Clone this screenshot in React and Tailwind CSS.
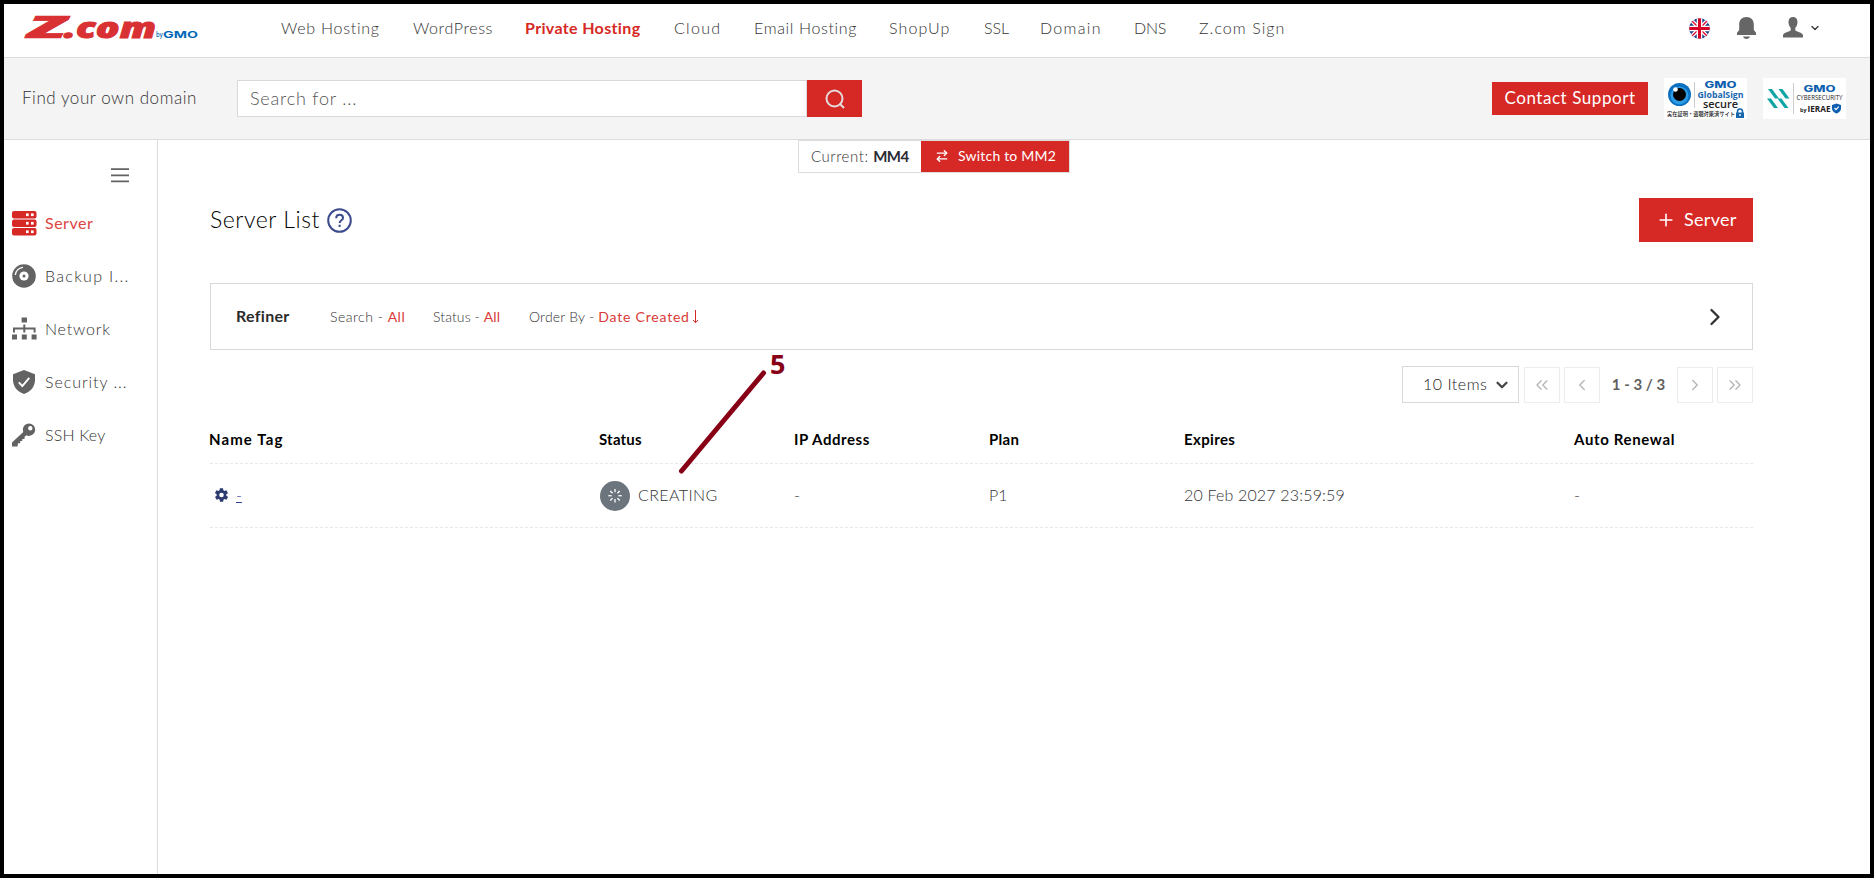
import {
    ArrowRightLeft,
    ChevronDown,
    ChevronLeft,
    ChevronRight,
    ChevronsLeft,
    ChevronsRight,
    Plus,
} from "lucide-react";

const NAV = [
    { label: "Web Hosting", cls: "w-[99px] tracking-[0.75px]" },
    { label: "WordPress", cls: "w-[79px] tracking-[0.6px]" },
    { label: "Private Hosting", cls: "w-[116px] font-bold text-[#d62926] tracking-[0.35px]" },
    { label: "Cloud", cls: "w-[47px] tracking-[1.3px]" },
    { label: "Email Hosting", cls: "w-[102px] tracking-[0.65px]" },
    { label: "ShopUp", cls: "w-[62px] tracking-[1.1px]" },
    { label: "SSL", cls: "w-[23px] tracking-[-0.1px]" },
    { label: "Domain", cls: "w-[61px] tracking-[1.3px]" },
    { label: "DNS", cls: "w-[32px] tracking-[-0.2px]" },
    { label: "Z.com Sign", cls: "w-[88px] tracking-[1.05px]" },
];

const COLUMNS = [
    { label: "Name Tag", cls: "tracking-[1.1px]" },
    { label: "Status", cls: "tracking-[0.2px]" },
    { label: "IP Address", cls: "tracking-[0.55px]" },
    { label: "Plan", cls: "tracking-[0.3px]" },
    { label: "Expires", cls: "tracking-[0.35px]" },
    { label: "Auto Renewal", cls: "tracking-[0.65px]" },
];
const GRID = "grid grid-cols-[390px_195px_195px_195px_390px_178px]";

function Logo() {
    return (
        <svg width="182" height="46" viewBox="-5 -10 182 46" className="block shrink-0">
            <g fill="#d93133" stroke="#d93133" fontFamily="'Open Sans', sans-serif" fontWeight="800" fontStyle="italic">
                <text x="4" y="23" fontSize="30" strokeWidth="0.6" textLength="38" lengthAdjust="spacingAndGlyphs">Z</text>
                <text x="40" y="23" fontSize="29" strokeWidth="1" textLength="92" lengthAdjust="spacingAndGlyphs">.com</text>
            </g>
            <g fill="#0068b6" fontFamily="Inter, sans-serif">
                <text x="132" y="22" fontSize="7" fontWeight="500" textLength="7" lengthAdjust="spacingAndGlyphs">by</text>
                <text x="139" y="23" fontSize="9.6" fontWeight="700" textLength="35" lengthAdjust="spacingAndGlyphs">GMO</text>
            </g>
        </svg>
    );
}

function Flag() {
    return (
        <svg width="21" height="21" viewBox="0 0 21 21" className="block">
            <clipPath id="round"><circle cx="10.5" cy="10.5" r="10.3" /></clipPath>
            <g clipPath="url(#round)">
                <rect width="21" height="21" fill="#1b3b8b" />
                <path d="M0 0L21 21M21 0L0 21" stroke="#fff" strokeWidth="4" />
                <path d="M0 0L21 21M21 0L0 21" stroke="#d80027" strokeWidth="1.3" />
                <path d="M10.5 0V21M0 10.5H21" stroke="#fff" strokeWidth="5.6" />
                <path d="M10.5 0V21M0 10.5H21" stroke="#d80027" strokeWidth="3" />
            </g>
        </svg>
    );
}

function BellIcon() {
    return (
        <svg width="19" height="22" viewBox="0 0 19 22" fill="#666" className="block">
            <path d="M9.5 0C5 0 2.2 3 2.2 7.2V13L0 15.7V18H19V15.7L16.8 13V7.2C16.8 3 14 0 9.5 0Z" />
            <path d="M6 19.6H13C12.5 21 11.2 22 9.5 22S6.5 21 6 19.6Z" />
        </svg>
    );
}

function UserIcon() {
    return (
        <svg width="20" height="21" viewBox="0 0 20 21" fill="#666" className="block">
            <path d="M10 0C12.7 0 14.5 1.8 14.5 4.8C14.5 7.5 13.7 9.5 12.3 10.8V13.5C14.5 15 20 15.5 20 18.5V20.5H0V18.5C0 15.5 5.5 15 7.7 13.5V10.8C6.3 9.5 5.5 7.5 5.5 4.8C5.5 1.8 7.3 0 10 0Z" />
        </svg>
    );
}

function GlobalSignBadge() {
    return (
        <svg width="83" height="41" viewBox="0 0 83 41" className="block bg-white">
            <circle cx="15.5" cy="16.5" r="11.5" fill="#0b6fc0" />
            <circle cx="15.5" cy="17.5" r="9" fill="#2b9be6" />
            <circle cx="15.5" cy="16.5" r="6.5" fill="#000" />
            <circle cx="11.5" cy="11.5" r="2.3" fill="#fff" />
            <path d="M30.5 4V30" stroke="#ccc" />
            <text x="40.5" y="10" fontSize="8.6" fontWeight="800" fill="#0f5fb0" fontFamily="Inter, sans-serif" textLength="32" lengthAdjust="spacingAndGlyphs">GMO</text>
            <text x="33.5" y="19.5" fontSize="8.3" fontWeight="700" fill="#1766b0" fontFamily="'Open Sans', sans-serif" textLength="46" lengthAdjust="spacingAndGlyphs">GlobalSign</text>
            <text x="39" y="30" fontSize="10" fontWeight="600" fill="#222" fontFamily="'Open Sans', sans-serif" textLength="35" lengthAdjust="spacingAndGlyphs">secure</text>
            <text x="3" y="38.3" fontSize="5.8" fontWeight="500" fill="#222" fontFamily="'Noto Sans CJK JP', sans-serif" textLength="68" lengthAdjust="spacingAndGlyphs">実在証明・盗聴対策済サイト</text>
            <path d="M73.5 35V33.5A2.5 2.5 0 0 1 78.5 33.5V35" fill="none" stroke="#1766b0" strokeWidth="1.5" />
            <rect x="72" y="34.5" width="8" height="5.5" fill="#1766b0" />
            <circle cx="76" cy="37" r="0.9" fill="#fff" />
        </svg>
    );
}

function CyberSecurityBadge() {
    return (
        <svg width="83" height="41" viewBox="0 0 83 41" className="block bg-white">
            <g fill="#12a5a5">
                <path d="M5 11H9L16 20.5H12Z" />
                <path d="M15.5 11H19.5L26.5 20.5H22.5Z" />
                <path d="M4 20.5H8L15 30H11Z" />
                <path d="M14.5 20.5H18.5L25.5 30H21.5Z" />
            </g>
            <path d="M30.5 5V36" stroke="#ccc" />
            <text x="40.5" y="14" fontSize="8.6" fontWeight="800" fill="#0f5fb0" fontFamily="Inter, sans-serif" textLength="32" lengthAdjust="spacingAndGlyphs">GMO</text>
            <text x="33.5" y="22.3" fontSize="6.6" fill="#222" fontWeight="400" fontFamily="'Open Sans', sans-serif" textLength="46" lengthAdjust="spacingAndGlyphs">CYBERSECURITY</text>
            <text x="37" y="33.5" fontSize="5.5" fontWeight="700" fill="#222" fontFamily="'Open Sans', sans-serif" textLength="6.5" lengthAdjust="spacingAndGlyphs">by</text>
            <text x="44.5" y="34" fontSize="8" fontWeight="700" fill="#222" fontFamily="'Open Sans', sans-serif" textLength="23" lengthAdjust="spacingAndGlyphs">IERAE</text>
            <path d="M73.5 25.5L78 27V30.5C78 33 76 34.5 73.5 35.5C71 34.5 69 33 69 30.5V27Z" fill="#0f5fb0" />
            <path d="M71.5 30L73 31.7L75.7 28.6" fill="none" stroke="#fff" strokeWidth="1.2" />
        </svg>
    );
}

function ServerIcon() {
    return (
        <svg width="25" height="25" viewBox="0 0 25 25" className="relative top-px block">
            {[0, 8.5, 17].map((y) => (
                <g key={y} transform={`translate(0 ${y})`}>
                    <rect width="24.5" height="7.6" rx="2" fill="#d62926" />
                    <rect x="14" y="2.4" width="2.7" height="2.7" fill="#fff" />
                    <rect x="19" y="2.4" width="2.7" height="2.7" fill="#fff" />
                </g>
            ))}
        </svg>
    );
}

function DiscIcon() {
    return (
        <svg width="24" height="24" viewBox="0 0 24 24" fill="none" className="block">
            <circle cx="12" cy="12" r="11.8" fill="#636363" />
            <circle cx="12" cy="12" r="4.6" fill="#fff" />
            <circle cx="12" cy="12" r="1.5" fill="#636363" />
            <path d="M3.3 11A8.7 8.7 0 0 1 11 3.3" stroke="#fff" strokeWidth="1.3" />
        </svg>
    );
}

function NetworkIcon() {
    return (
        <svg width="25" height="24" viewBox="0 0 25 24" fill="#636363" className="block">
            <path d="M9.6 0.5H15V5.5H9.6ZM0 17.5H5V22.5H0ZM9.8 17.5H14.8V22.5H9.8ZM19.6 17.5H24.6V22.5H19.6Z" />
            <path d="M12.3 7.5V15.5M2 15.5V11.5H22.6V15.5" fill="none" stroke="#636363" strokeWidth="2" />
        </svg>
    );
}

function ShieldIcon() {
    return (
        <svg width="24" height="24" viewBox="0 0 24 24" fill="none" className="block">
            <path d="M12 0L23 4.2V10C23 17 18 22 12 24C6 22 1 17 1 10V4.2Z" fill="#636363" />
            <path d="M6.8 12.3L10.3 16L17.3 7.8" stroke="#fff" strokeWidth="1.9" />
        </svg>
    );
}

function KeyIcon() {
    return (
        <svg width="24" height="24" viewBox="0 0 24 24" fill="#636363" className="block">
            <path fillRule="evenodd" d="M17 0.5A6.2 6.2 0 0 1 17 12.9C16 12.9 15 12.7 14.2 12.2L12.5 14V16H10.3V18H8.2V20.2H6L5.5 23.5H0V19.5L11.3 9A6.2 6.2 0 0 1 17 0.5ZM18.3 3A2.2 2.2 0 1 0 18.3 7.4A2.2 2.2 0 0 0 18.3 3Z" />
        </svg>
    );
}

function GearIcon() {
    return (
        <svg width="13" height="14" viewBox="2 1.5 20 21" preserveAspectRatio="none" fill="#2e3b6e" className="block">
            <path d="M19.4 13c0-.3.1-.6.1-1s0-.7-.1-1l2.2-1.7c.2-.2.2-.4.1-.7l-2-3.5c-.1-.2-.4-.3-.6-.2l-2.6 1c-.5-.4-1.1-.7-1.7-1l-.4-2.7c0-.2-.2-.4-.5-.4h-4c-.2 0-.5.2-.5.4L9 4.9c-.6.3-1.2.6-1.7 1l-2.6-1c-.2-.1-.5 0-.6.2l-2 3.5c-.1.2-.1.5.1.7L4.6 11c0 .3-.1.6-.1 1s0 .7.1 1l-2.2 1.7c-.2.2-.2.4-.1.7l2 3.5c.1.2.4.3.6.2l2.6-1c.5.4 1.1.7 1.7 1l.4 2.7c0 .2.2.4.5.4h4c.2 0 .5-.2.5-.4l.4-2.7c.6-.3 1.2-.6 1.7-1l2.6 1c.2.1.5 0 .6-.2l2-3.5c.1-.2.1-.5-.1-.7zM12 15.5a3.5 3.5 0 1 1 0-7 3.5 3.5 0 0 1 0 7z" />
        </svg>
    );
}

function SpinnerIcon() {
    return (
        <svg width="30" height="30" viewBox="0 0 30 30" className="block">
            <circle cx="15" cy="15" r="15" fill="#6c757d" />
            {[0, 45, 90, 135, 180, 225, 270, 315].map((a) => (
                <path key={a} d="M15 8V11.3" stroke="#fff" strokeWidth="1.3" transform={`rotate(${a} 15 14.7)`} />
            ))}
        </svg>
    );
}

const SIDEBAR = [
    { label: "Server", icon: <ServerIcon />, cls: "font-normal text-[#dc4442] tracking-[0.5px]" },
    { label: "Backup I...", icon: <DiscIcon />, cls: "tracking-[1.3px]" },
    { label: "Network", icon: <NetworkIcon />, cls: "tracking-[0.8px]" },
    { label: "Security ...", icon: <ShieldIcon />, cls: "tracking-[0.95px]" },
    { label: "SSH Key", icon: <KeyIcon />, cls: "tracking-[0.15px]" },
];

function Header() {
    return (
        <header className="flex h-[54px] shrink-0 items-center border-b border-[#dcdcdc] pl-[15px] pr-[45px] pb-[6px]">
            <Logo />
            <nav className="ml-20 flex gap-[33px] text-[16px] leading-5">
                {NAV.map((n) => (
                    <a key={n.label} className={`${n.cls} whitespace-nowrap`}>{n.label}</a>
                ))}
            </nav>
            <div className="ml-auto flex items-center">
                <span className="pt-px"><Flag /></span>
                <span className="ml-[27px]"><BellIcon /></span>
                <span className="ml-[27px]"><UserIcon /></span>
                <ChevronDown size={12} strokeWidth={2.6} className="ml-[6px] mr-1" />
            </div>
        </header>
    );
}

function SearchBar() {
    return (
        <div className="flex h-[82px] shrink-0 items-center border-b border-[#dcdcdc] bg-[#f4f4f4] pl-[18px] pr-[24px]">
            <span className="w-[215px] whitespace-nowrap pb-px text-[17px] tracking-[0.55px]">Find your own domain</span>
            <div className="flex h-[37px]">
                <div className="flex w-[570px] items-center border border-[#d9d9d9] bg-white pl-3 text-[18px] tracking-[0.8px] text-[#555]">
                    Search for ...
                </div>
                <button className="flex w-[55px] items-center justify-center bg-[#d62926]">
                    <svg width="20" height="20" viewBox="0 0 20 20" fill="none" stroke="#e3dddd" strokeWidth="2">
                        <circle cx="9.5" cy="9.5" r="8" />
                        <path d="M14.5 14.5L19 19" />
                    </svg>
                </button>
            </div>
            <div className="ml-auto flex items-center gap-4">
                <button className="h-[33px] w-[156px] whitespace-nowrap bg-[#d62926] pb-px text-[17px] font-normal tracking-[0.55px] text-white">Contact Support</button>
                <GlobalSignBadge />
                <CyberSecurityBadge />
            </div>
        </div>
    );
}

function Sidebar() {
    return (
        <aside className="flex w-[154px] shrink-0 flex-col border-r border-[#dcdcdc] pl-2">
            <div className="flex h-14 items-end justify-end pr-[28px] pb-[13px]">
                <svg width="18" height="15" viewBox="0 0 18 15" stroke="#636363" strokeWidth="1.8">
                    <path d="M0 1.2H18M0 7.3H18M0 13.4H18" />
                </svg>
            </div>
            {SIDEBAR.map((s) => (
                <a key={s.label} className={`flex h-[53px] items-center gap-2 whitespace-nowrap text-[16px] ${s.cls}`}>
                    <span className="w-[25px]">{s.icon}</span>
                    {s.label}
                </a>
            ))}
        </aside>
    );
}

function Pager() {
    const btn = "flex h-9 w-9 items-center justify-center border border-[#ececec] text-[#b5b5b5]";
    return (
        <div className="mt-[16px] flex h-[37px] items-end justify-end">
            <div className="mr-[5px] flex h-[37px] w-[117px] items-center border border-[#d9d9d9] pl-[20px] text-[16px] text-[#222]">
                <span className="w-[70px] whitespace-nowrap pb-0.5 tracking-[0.5px]">10 Items</span>
                <ChevronDown size={18} strokeWidth={3} className="text-[#444]" />
            </div>
            <div className={btn}><ChevronsLeft size={20} strokeWidth={1.6} /></div>
            <div className={`${btn} ml-1`}><ChevronLeft size={18} strokeWidth={1.8} /></div>
            <span className="w-[77px] self-center text-center text-[15px] font-bold text-[#5f5f5f]">1 - 3 / 3</span>
            <div className={btn}><ChevronRight size={18} strokeWidth={1.8} /></div>
            <div className={`${btn} ml-1`}><ChevronsRight size={20} strokeWidth={1.6} /></div>
        </div>
    );
}

function ServerTable() {
    return (
        <div className="mt-[13px]">
            <div className={`${GRID} h-[48px] items-center border-b border-dashed border-[#e8e8e8] text-[15px] font-bold text-black`}>
                {COLUMNS.map((c) => (
                    <span key={c.label} className={`${c.cls} -ml-px`}>{c.label}</span>
                ))}
            </div>
            <div className={`${GRID} h-[64px] items-center border-b border-dashed border-[#e8e8e8] text-[16px]`}>
                <div className="flex items-center gap-2 pb-0.5 pl-[5px]">
                    <GearIcon />
                    <a className="text-[#2e3f8f] underline">-</a>
                </div>
                <div className="flex items-center gap-2">
                    <SpinnerIcon />
                    <span className="pb-0.5 tracking-[0.4px]">CREATING</span>
                </div>
                <span className="-ml-px pb-0.5">-</span>
                <span className="-ml-px pb-0.5">P1</span>
                <span className="-ml-px pb-0.5 tracking-[0.17px]">20 Feb 2027 23:59:59</span>
                <span className="-ml-px pb-0.5">-</span>
            </div>
        </div>
    );
}

function Main() {
    return (
        <main className="flex-1 pl-[52px] pr-[117px]">
            <div className="-ml-[52px] flex pl-[640px]">
                <div className="flex h-[33px] w-[272px] border border-[#dcdcdc] text-[15px]">
                    <span className="w-[122px] whitespace-nowrap pl-3 leading-[31px] tracking-[0.55px]">
                        Current: <b className="font-bold tracking-[-0.5px] text-[#2b2b33]">MM4</b>
                    </span>
                    <button className="flex flex-1 items-center whitespace-nowrap bg-[#d62926] pb-0.5 pl-[14px] text-[14px] font-normal tracking-[0.2px] text-white">
                        <ArrowRightLeft size={14} strokeWidth={2.4} className="mr-[9px]" />
                        Switch to MM2
                    </button>
                </div>
            </div>
            <div className="mt-[25px] flex h-11 items-center">
                <h1 className="w-[117px] whitespace-nowrap pb-0.5 text-[23px] font-light tracking-[0.55px] text-black">Server List</h1>
                <svg width="25" height="25" viewBox="0 0 25 25" fill="none" stroke="#3c4b8c" strokeWidth="2">
                    <circle cx="12.5" cy="12.5" r="11.3" />
                    <path d="M9.2 10.2C9.2 8 10.6 6.8 12.6 6.8S16 8 16 9.9C16 12.3 12.6 12.3 12.6 15M12.6 16.7V18.9" />
                </svg>
                <button className="ml-auto flex h-11 w-[114px] items-center bg-[#d62926] pl-[17px] text-[18px] font-normal tracking-[0.3px] text-white">
                    <Plus size={20} strokeWidth={1.9} className="mr-2" />
                    <span className="pb-0.5">Server</span>
                </button>
            </div>
            <section className="mt-[41px] flex h-[67px] items-center border border-[#d9d9d9] pl-[25px] pr-[23px] text-[14px]">
                <b className="w-[94px] pb-0.5 text-[16px] font-bold tracking-[0.3px] text-[#2b2b2b]">Refiner</b>
                <span className="w-[103px] pb-px tracking-[0.5px]">Search - <em className="font-normal not-italic text-[#d93a37]">All</em></span>
                <span className="w-[96px] pb-px tracking-[0.1px]">Status - <em className="font-normal not-italic text-[#d93a37]">All</em></span>
                <span className="flex items-center whitespace-nowrap pb-px tracking-[0.2px]">
                    Order By -&nbsp;<em className="font-normal not-italic tracking-[0.8px] text-[#d93a37]">Date Created</em>
                    <svg width="7" height="14" viewBox="0 0 7 14" fill="none" stroke="#d62926" className="ml-[2px] mt-0.5">
                        <path d="M3.5 0V12.5M1 10L3.5 12.8L6 10" />
                    </svg>
                </span>
                <ChevronRight size={28} strokeWidth={2} className="ml-auto text-[#333]" />
            </section>
            <Pager />
            <ServerTable />
        </main>
    );
}

export default function App() {
    return (
        <div className="relative flex h-[878px] w-[1874px] flex-col overflow-hidden border-4 border-black bg-white font-['Lato',sans-serif] font-light text-[#333]">
            <Header />
            <SearchBar />
            <div className="flex flex-1">
                <Sidebar />
                <Main />
            </div>

            {/* Step marker over the status cell */}
            <svg width="94" height="108" viewBox="0 0 94 108" className="absolute left-[673px] top-[363px]">
                <path d="M4.5 104L86.5 6" stroke="#880016" strokeWidth="5" strokeLinecap="round" />
            </svg>
            <span className="absolute left-[766px] top-[342px] font-['Open_Sans',sans-serif] text-[27px] font-bold leading-[36px] text-[#880016]">5</span>
        </div>
    );
}
